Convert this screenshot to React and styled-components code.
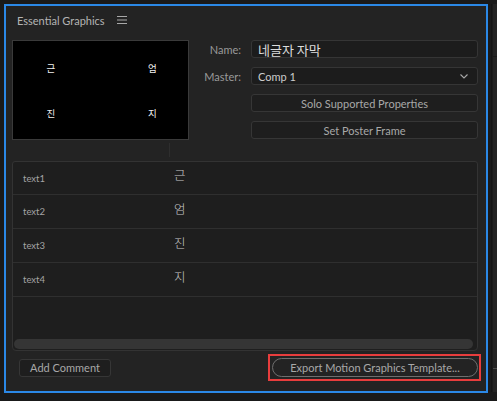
import styled, { createGlobalStyle } from "styled-components";

const GlobalStyle = createGlobalStyle`
	html, body {
		margin: 0;
		padding: 0;
		background: #1a1a1a;
		font-family: Lato, "Noto Sans CJK KR", sans-serif;
	}
`;

const rows = [
	{ name: "text1", value: "근" },
	{ name: "text2", value: "엄" },
	{ name: "text3", value: "진" },
	{ name: "text4", value: "지" },
];

const App = () => {
	return (
		<>
			<GlobalStyle />
			<Page>
				<Panel>
					<Header>
						<span>Essential Graphics</span>
						<svg width="10" height="8" viewBox="0 0 10 8">
							<path d="M0 0.5H10M0 4H10M0 7.5H10" stroke="#a8a8a8" strokeWidth="1" />
						</svg>
					</Header>
					<Top>
						<Preview>
							<span>근</span>
							<span>엄</span>
							<span>진</span>
							<span>지</span>
						</Preview>
						<Form>
							<Label>Name:</Label>
							<Field $bright>네글자 자막</Field>
							<Label>Master:</Label>
							<Field>
								Comp 1
								<svg width="8" height="5" viewBox="0 0 8 5">
									<path d="M0.5 0.5L4 4L7.5 0.5" stroke="#a8a8a8" fill="none" strokeWidth="1.1" />
								</svg>
							</Field>
							<span />
							<FlatButton>Solo Supported Properties</FlatButton>
							<span />
							<FlatButton>Set Poster Frame</FlatButton>
						</Form>
					</Top>
					<Splitter>
						<i />
					</Splitter>
					<Table>
						{rows.map((row) => (
							<Row key={row.name}>
								<Cell>{row.name}</Cell>
								<Value>{row.value}</Value>
							</Row>
						))}
						<Spacer />
						<Scrollbar />
					</Table>
					<Footer>
						<FlatButton $width="92px">Add Comment</FlatButton>
						<Highlight>
							<PillButton>Export Motion Graphics Template...</PillButton>
						</Highlight>
					</Footer>
				</Panel>
				<Side>
					<SideTop />
					<SideBottom />
				</Side>
			</Page>
		</>
	);
};

const Page = styled.div`
	display: flex;
	height: 401px;
	padding: 4px 0 0 4px;
	box-sizing: border-box;
	gap: 3px;
`;

const Panel = styled.div`
	width: 484px;
	height: 389px;
	box-sizing: border-box;
	border: 2px solid #2b88e6;
	background: #232323;
	display: flex;
	flex-direction: column;
	padding: 0 8px 0 6px;
`;

const Header = styled.div`
	height: 26px;
	display: flex;
	align-items: center;
	gap: 12px;
	padding-left: 5px;
	padding-top: 1px;
	color: #b4b4b4;
	font-size: 11px;
`;

const Top = styled.div`
	display: flex;
	margin-top: 7px;
`;

const Preview = styled.div`
	width: 177px;
	height: 100px;
	box-sizing: border-box;
	background: #000;
	border: 1px solid #3a3a3a;
	display: grid;
	grid-template-columns: 1fr 1fr;
	grid-template-rows: 1fr 1fr;
	padding: 4px 0 4px;
	color: #f0f0f0;
	font-family: "Noto Sans CJK KR", sans-serif;
	font-size: 9.5px;
	span {
		display: flex;
		align-items: center;
		justify-content: center;
		transform: translateX(-6px);
	}
	span:nth-child(2n) {
		transform: translateX(8px);
	}
`;

const Form = styled.div`
	flex: 1;
	display: grid;
	grid-template-columns: 52px 1fr;
	column-gap: 10px;
	row-gap: 9px;
	grid-auto-rows: 18px;
`;

const Label = styled.div`
	display: flex;
	align-items: center;
	justify-content: flex-end;
	color: #9a9a9a;
	font-size: 11px;
`;

const Field = styled.div`
	display: flex;
	align-items: center;
	justify-content: space-between;
	box-sizing: border-box;
	background: #1c1c1c;
	border: 1px solid #353535;
	border-radius: 3px;
	padding: 0 9px 0 6px;
	color: ${(p) => (p.$bright ? "#dcdcdc" : "#cccccc")};
	font-size: ${(p) => (p.$bright ? "13px" : "11px")};
	font-family: ${(p) => (p.$bright ? '"Noto Sans CJK KR", sans-serif' : "Lato, sans-serif")};
`;

const FlatButton = styled.div`
	display: flex;
	align-items: center;
	justify-content: center;
	box-sizing: border-box;
	height: 18px;
	width: ${(p) => p.$width || "auto"};
	background: #1e1e1e;
	border: 1px solid #363636;
	border-radius: 3px;
	color: #a8a8a8;
	font-size: 11px;
`;

const Splitter = styled.div`
	height: 21px;
	position: relative;
	i {
		position: absolute;
		left: 157px;
		top: 3px;
		width: 1px;
		height: 14px;
		background: #2e2e2e;
	}
`;

const Table = styled.div`
	height: 190px;
	box-sizing: border-box;
	border: 1px solid #333;
	border-radius: 3px 3px 4px 4px;
	background: #1e1e1e;
	display: flex;
	flex-direction: column;
`;

const Row = styled.div`
	height: 34px;
	flex-shrink: 0;
	box-sizing: border-box;
	border-bottom: 1px solid #2f2f2f;
	display: flex;
	align-items: center;
	&:first-child {
		height: 33px;
	}
`;

const Cell = styled.div`
	width: 151px;
	padding-left: 10px;
	color: #a4a4a4;
	font-size: 9.5px;
`;

const Value = styled.div`
	color: #c8c8c8;
	font-family: "Noto Sans CJK KR", sans-serif;
	font-weight: 300;
	font-size: 12.5px;
	margin-top: -7px;
`;

const Spacer = styled.div`
	flex: 1;
`;

const Scrollbar = styled.div`
	height: 10px;
	margin: 0 4px 1px 1px;
	border-radius: 5px;
	background: #353535;
`;

const Footer = styled.div`
	display: flex;
	align-items: center;
	justify-content: space-between;
	padding: 3px 0 0 7px;
	margin-right: -3px;
`;

const Highlight = styled.div`
	border: 2px solid #e83d3d;
	padding: 2px 1px 2px 2px;
`;

const PillButton = styled.div`
	width: 206px;
	height: 19px;
	box-sizing: border-box;
	border: 1px solid #6e6e6e;
	border-radius: 10px;
	display: flex;
	align-items: center;
	justify-content: center;
	color: #a8a8a8;
	font-size: 11px;
`;

const Side = styled.div`
	flex: 1;
	display: flex;
	flex-direction: column;
	gap: 1px;
	height: 388px;
	border-left: 1px solid #141414;
	padding-left: 1px;
`;

const SideTop = styled.div`
	height: 52px;
	background: #232323;
`;

const SideBottom = styled.div`
	flex: 1;
	background: #232323;
	background-image: linear-gradient(#232323 311px, #4a4a4a 311px, #4a4a4a 312px, #232323 312px);
`;

export default App;
